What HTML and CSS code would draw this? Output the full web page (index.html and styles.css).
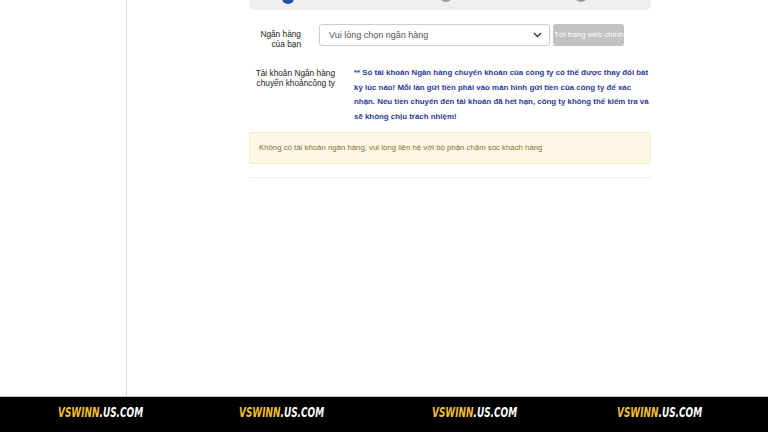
FILE: index.html
```html
<!DOCTYPE html>
<html lang="vi">
<head>
<meta charset="utf-8">
<link rel="stylesheet" href="styles.css">
</head>
<body>
<div class="page">
  <aside class="sidebar"></aside>
  <main class="main">
    <div class="panel">
      <div class="steps">
        <span class="dot dot-active dot-1"></span>
        <span class="dot dot-2"></span>
        <span class="dot dot-3"></span>
      </div>
      <div class="row row-bank">
        <div class="label label-bank">Ngân hàng của bạn</div>
        <div class="select">
          <span>Vui lòng chọn ngân hàng</span>
          <svg class="chev" width="9" height="6" viewBox="0 0 9 6"><path d="M1 1l3.5 3.5L8 1" fill="none" stroke="#333" stroke-width="1.4"/></svg>
        </div>
        <div class="btn">Tới trang web chính</div>
      </div>
      <div class="row row-acc">
        <div class="label label-acc">Tài khoản Ngân hàng chuyển khoảncông ty</div>
        <div class="note">** Số tài khoản Ngân hàng chuyển khoản của công ty có thể được thay đổi bất kỳ lúc nào! Mỗi lần gửi tiền phải vào màn hình gửi tiền của công ty để xác nhận. Nếu tiền chuyển đến tài khoản đã hết hạn, công ty không thể kiểm tra và sẽ không chịu trách nhiệm!</div>
      </div>
      <div class="alert">Không có tài khoản ngân hàng, vui lòng liên hệ với bộ phận chăm sóc khách hàng</div>
      <div class="rule"></div>
    </div>
  </main>
</div>
<footer class="footer">
  <div class="cell"><span class="brand"><span class="y">VSWINN</span>.US.COM</span></div>
  <div class="cell"><span class="brand"><span class="y">VSWINN</span>.US.COM</span></div>
  <div class="cell"><span class="brand"><span class="y">VSWINN</span>.US.COM</span></div>
  <div class="cell"><span class="brand"><span class="y">VSWINN</span>.US.COM</span></div>
</footer>
</body>
</html>
```
FILE: styles.css
```css
* { box-sizing: border-box; }
html, body { margin: 0; padding: 0; }
body {
  width: 768px;
  height: 432px;
  overflow: hidden;
  background: #fff;
  font-family: "Liberation Sans", Arial, sans-serif;
  color: #333;
}
.page {
  display: flex;
  height: 396px;
}
.sidebar {
  width: 127px;
  border-right: 1px solid #dcdcdc;
  flex: none;
}
.main {
  flex: 1;
  padding-left: 122px;
}
.panel {
  width: 402px;
}
.steps {
  position: relative;
  height: 10px;
  background: #efefef;
  border-radius: 0 0 5px 5px;
}
.dot {
  position: absolute;
  width: 12px;
  height: 12px;
  border-radius: 50%;
  background: #999;
  top: -9px;
}
.dot-active { background: #1f4fa8; top: -8px; }
.dot-1 { left: 33px; }
.dot-2 { left: 191px; top: -10px; }
.dot-3 { left: 326px; top: -10px; }
.row {
  display: flex;
}
.row-bank {
  margin-top: 14px;
  align-items: flex-start;
}
.label {
  font-size: 8.3px;
  line-height: 10px;
  color: #222;
}
.label-bank {
  width: 52px;
  text-align: right;
  padding-top: 5px;
}
.select {
  margin-left: 18px;
  width: 231px;
  height: 22px;
  border: 1px solid #ccc;
  border-radius: 3px;
  display: flex;
  align-items: center;
  justify-content: space-between;
  padding: 0 7px 0 9px;
  font-size: 9px;
  color: #555;
}
.chev { display: block; }
.btn {
  margin-left: 3px;
  width: 71px;
  height: 22px;
  background: #c2c2c2;
  border-radius: 3px;
  color: #fff;
  font-size: 7.8px;
  line-height: 22px;
  white-space: nowrap;
  overflow: hidden;
  padding-left: 1px;
}
.row-acc {
  margin-top: 19px;
}
.label-acc {
  width: 86px;
  text-align: right;
}
.note {
  margin-left: 19px;
  width: 296px;
  font-size: 7.9px;
  line-height: 14.6px;
  font-weight: bold;
  color: #2b3a98;
  margin-top: -2px;
}
.alert {
  margin-top: 8px;
  height: 32px;
  background: #fcf8e3;
  border: 1px solid #f7ecc8;
  border-radius: 2px;
  color: #8a6d3b;
  font-size: 7.8px;
  line-height: 30px;
  padding-left: 9px;
}
.rule {
  margin-top: 13px;
  height: 1px;
  background: #eeeeee;
}
.footer {
  height: 36px;
  background: #000;
  border-top: 1px solid #bdbdbd;
  display: grid;
  grid-template-columns: 181px 193px 185px auto;
  padding-left: 58px;
  align-items: center;
}
.cell {
  height: 16px;
  overflow: visible;
  white-space: nowrap;
  margin-bottom: 7px;
}
.brand {
  display: inline-block;
  transform: scaleX(0.71);
  transform-origin: left center;
  font-family: "DejaVu Sans Condensed", "DejaVu Sans", sans-serif;
  font-stretch: condensed;
  font-weight: bold;
  font-style: italic;
  font-size: 14px;
  color: #fff;
  line-height: 16px;
}
.brand .y { color: #f2c12e; }
```
